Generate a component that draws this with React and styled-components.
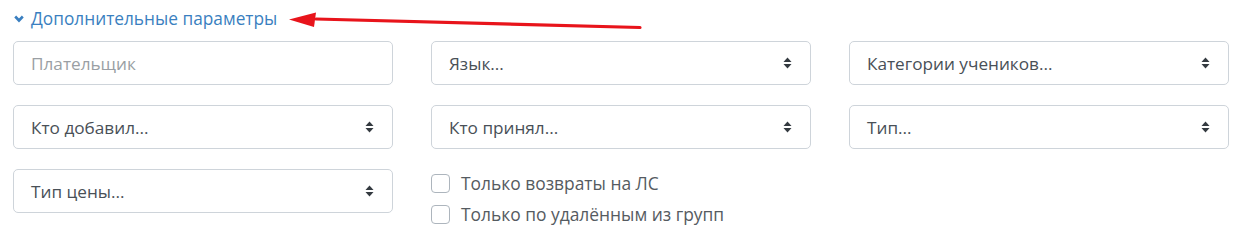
import React from "react";
import styled, { createGlobalStyle } from "styled-components";

const Global = createGlobalStyle`
  html, body { margin: 0; padding: 0; background: #fff; }
  body { font-family: "Open Sans", "Noto Sans", sans-serif; }
`;

const Page = styled.div`
  position: relative;
  width: 1239px;
  height: 232px;
  padding: 8px 0 0 13px;
  box-sizing: border-box;
  overflow: hidden;
`;

const Toggle = styled.a`
  display: flex;
  width: fit-content;
  align-items: center;
  gap: 7px;
  height: 22px;
  padding-left: 1px;
  color: #3a7fc0;
  font-size: 17.3px;
  line-height: 22px;
  text-decoration: none;
  cursor: pointer;
`;

const Grid = styled.div`
  display: grid;
  grid-template-columns: repeat(3, 380px);
  column-gap: 38px;
  row-gap: 20px;
  margin-top: 11px;
`;

const Field = styled.div`
  display: flex;
  align-items: center;
  justify-content: space-between;
  height: 44px;
  box-sizing: border-box;
  border: 1px solid #ced4da;
  border-radius: 5px;
  padding: 0 18px 0 17px;
  font-size: 17.2px;
  color: ${(p) => (p.$placeholder ? "#9a9fa4" : "#495057")};
  background: #fff;
`;

const Checks = styled.div`
  display: flex;
  flex-direction: column;
  gap: 7px;
  margin-top: 2px;
`;

const CheckRow = styled.label`
  display: flex;
  align-items: center;
  gap: 11px;
  height: 24px;
  font-size: 17.4px;
  color: #555b61;
`;

const Box = styled.span`
  width: 19px;
  height: 19px;
  box-sizing: border-box;
  border: 1px solid #adb5bd;
  border-radius: 4px;
  background: #fff;
`;

const Annotation = styled.svg`
  position: absolute;
  left: 286px;
  top: 8px;
`;

const Caret = () => (
  <svg width="9" height="12" viewBox="0 0 9 12">
    <path d="M4.5 0.5 L8.5 5 H0.5 Z" fill="#343a40" />
    <path d="M4.5 11.5 L8.5 7 H0.5 Z" fill="#343a40" />
  </svg>
);

const Select = ({ children }) => (
  <Field>
    <span>{children}</span>
    <Caret />
  </Field>
);

const Check = ({ children }) => (
  <CheckRow>
    <Box />
    {children}
  </CheckRow>
);

export default function App() {
  return (
    <>
      <Global />
      <Page>
        <Toggle>
          <svg width="10" height="8" viewBox="0 0 10 8">
            <path d="M1.2 1.5 L5 5.5 L8.8 1.5" fill="none" stroke="#3a7fc0" strokeWidth="2.6" />
          </svg>
          Дополнительные параметры
        </Toggle>
        <Grid>
          <Field $placeholder>Плательщик</Field>
          <Select>Язык...</Select>
          <Select>Категории учеников...</Select>
          <Select>Кто добавил...</Select>
          <Select>Кто принял...</Select>
          <Select>Тип...</Select>
          <Select>Тип цены...</Select>
          <Checks>
            <Check>Только возвраты на ЛС</Check>
            <Check>Только по удалённым из групп</Check>
          </Checks>
        </Grid>
        <Annotation width="360" height="26" viewBox="0 0 360 26">
          <path d="M30 11 L354 19.5" stroke="#e8141b" strokeWidth="3.2" strokeLinecap="round" />
          <path d="M3 11.5 L30 4.5 L28 19 Z" fill="#e8141b" />
        </Annotation>
      </Page>
    </>
  );
}
